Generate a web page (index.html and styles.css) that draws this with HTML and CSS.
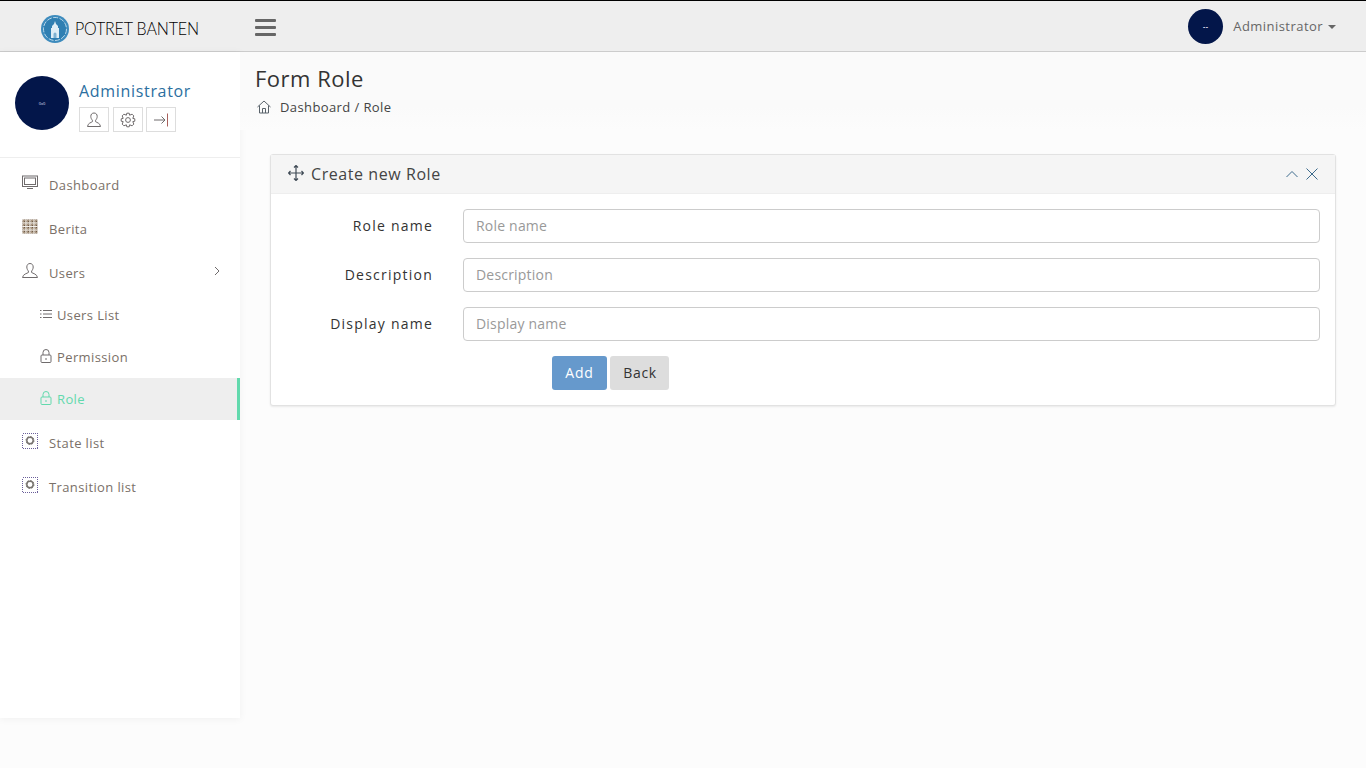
FILE: index.html
```html
<!DOCTYPE html>
<html lang="en">
<head>
<meta charset="utf-8">
<title>Form Role</title>
<link rel="stylesheet" href="styles.css">
</head>
<body>
<header class="navbar">
  <div class="brand">
    <svg class="logo" viewBox="0 0 28 28" width="28" height="28">
      <circle cx="14" cy="14" r="14" fill="#3d8bbd"/>
      <circle cx="14" cy="14" r="11.5" fill="#2f7fb2" stroke="#b9d8ea" stroke-width="1" stroke-dasharray="5 1.5"/>
      <path d="M14 6l1 3 2 2v2h1v10h-8V13h1v-2l2-2z" fill="#dfeef6"/>
      <path d="M12.5 23v-4a1.5 1.5 0 0 1 3 0v4z" fill="#7fb2d2"/>
    </svg>
    <span class="brand-name">POTRET BANTEN</span>
  </div>
  <button class="burger" aria-label="Toggle menu"><span></span><span></span><span></span></button>
  <div class="nav-user">
    <span class="avatar avatar-sm">--</span>
    <span class="nav-user-name">Administrator</span>
    <span class="caret"></span>
  </div>
</header>

<div class="layout">
  <aside class="sidebar">
    <div class="profile">
      <span class="avatar avatar-lg">0x0</span>
      <div class="profile-info">
        <div class="profile-name">Administrator</div>
        <div class="profile-actions">
          <a class="mini-btn"><svg viewBox="0 0 16 16" width="16" height="16" class="ic"><path d="M8 1c-2 0-3.200 1.400-3.200 3.400 0 1.600.8 3 1.600 3.800v1.500C5.200 10.600 1.900 11 1.500 14.500h13c-.4-3.500-3.700-3.900-4.900-4.800V8.200c.8-.8 1.600-2.200 1.600-3.800C11.200 2.400 10 1 8 1z"/></svg></a>
          <a class="mini-btn"><svg viewBox="0 0 16 16" width="16" height="16" class="ic"><circle cx="8" cy="8" r="2.400"/><path d="M6.800 1.200H9.200L9.600 3.200L12.100 2.200L13.800 3.900L12.800 6.400L14.800 6.800V9.200L12.800 9.600L13.800 12.100L12.100 13.800L9.600 12.800L9.200 14.800H6.800L6.400 12.800L3.900 13.800L2.200 12.100L3.200 9.600L1.200 9.200V6.800L3.200 6.400L2.200 3.900L3.900 2.200L6.400 3.200Z"/></svg></a>
          <a class="mini-btn"><svg viewBox="0 0 16 16" width="16" height="16" class="ic"><path d="M1 8h11M8.500 4.500L12 8l-3.500 3.500"/><path d="M14.500 1.500v13" stroke="#a8605c"/></svg></a>
        </div>
      </div>
    </div>
    <nav class="menu">
      <a class="item"><svg viewBox="0 0 16 16" width="16" height="16" class="ic item-ic"><rect x=".5" y="1" width="15" height="10.500"/><rect x="2.500" y="3" width="11" height="6.500"/><path d="M5 13.500h6"/></svg><span>Dashboard</span></a>
      <a class="item"><svg viewBox="0 0 16 16" width="16" height="16" class="item-ic">
        <defs><pattern id="stipple" width="2" height="2" patternUnits="userSpaceOnUse"><rect width="2" height="2" fill="#a8957f"/><rect width="1" height="1" fill="#6f5a48"/></pattern></defs>
        <rect x=".5" y=".5" width="15" height="14" fill="url(#stipple)"/><path d="M4 .5v14M8 .5v14M12 .5v14M.5 4h15M.5 7.500h15M.5 11h15" stroke="#f1eee9" stroke-width="1" fill="none"/></svg><span>Berita</span></a>
      <a class="item"><svg viewBox="0 0 16 16" width="16" height="16" class="ic item-ic"><path d="M8 .5c-2 0-3.200 1.500-3.200 3.500 0 1.700.8 3.200 1.600 4v1.500C5.200 10.400 1 11 .5 14.500h15C15 11 10.800 10.400 9.600 9.500V8c.8-.8 1.600-2.300 1.600-4 0-2-1.200-3.500-3.200-3.500z"/></svg><span>Users</span><svg class="ic chevron" viewBox="0 0 8 10" width="8" height="10"><path d="M2 1l4 4-4 4"/></svg></a>
      <div class="submenu">
        <a class="item sub"><svg viewBox="0 0 12 12" width="12" height="12" class="ic sub-ic"><path d="M3 2.500h9M3 6h9M3 9.500h9M0 2.500h1.500M0 6h1.500M0 9.500h1.500"/></svg><span>Users List</span></a>
        <a class="item sub"><svg viewBox="0 0 12 14" width="12" height="14" class="ic sub-ic"><rect x="1" y="6" width="10" height="7.500" rx="1"/><path d="M3 6V3.500a3 3 0 0 1 6 0V6M6 9v2"/></svg><span>Permission</span></a>
        <a class="item sub active"><svg viewBox="0 0 12 14" width="12" height="14" class="ic sub-ic"><rect x="1" y="6" width="10" height="7.500" rx="1"/><path d="M3 6V3.500a3 3 0 0 1 6 0V6M6 9v2"/></svg><span>Role</span></a>
      </div>
      <a class="item"><svg viewBox="0 0 16 16" width="16" height="16" class="ic item-ic state-ic"><rect x=".5" y=".5" width="15" height="15" class="dots"/><circle cx="8" cy="7.500" r="3.200" class="ring"/><circle cx="8" cy="7.500" r="4" class="teeth"/></svg><span>State list</span></a>
      <a class="item"><svg viewBox="0 0 16 16" width="16" height="16" class="ic item-ic state-ic"><rect x=".5" y=".5" width="15" height="15" class="dots"/><circle cx="8" cy="7.500" r="3.200" class="ring"/><circle cx="8" cy="7.500" r="4" class="teeth"/></svg><span>Transition list</span></a>
    </nav>
  </aside>

  <main class="content">
    <section class="page-head">
      <h1>Form Role</h1>
      <div class="crumbs">
        <svg viewBox="0 0 14 14" width="14" height="14" class="ic home"><path d="M.5 7L7 1l6.500 6M2.500 5.500V13h9V5.500M5.500 13V8.500h3V13"/></svg>
        <span>Dashboard / Role</span>
      </div>
    </section>
    <section class="card">
      <div class="card-head">
        <svg viewBox="0 0 16 16" width="16" height="16" class="ic move"><path d="M8 .5v15M.5 8h15M6 2.500L8 .5l2 2M6 13.500l2 2 2-2M2.500 6L.5 8l2 2M13.500 6l2 2-2 2"/></svg>
        <h2>Create new Role</h2>
        <div class="card-tools">
          <svg viewBox="0 0 12 8" width="12" height="8" class="tool"><path d="M.5 7L6 1.500 11.500 7"/></svg>
          <svg viewBox="0 0 12 12" width="12" height="12" class="tool"><path d="M.5.500l11 11M11.500.500l-11 11"/></svg>
        </div>
      </div>
      <form class="form">
        <div class="row"><label for="f1">Role name</label><input id="f1" placeholder="Role name"></div>
        <div class="row"><label for="f2">Description</label><input id="f2" placeholder="Description"></div>
        <div class="row"><label for="f3">Display name</label><input id="f3" placeholder="Display name"></div>
        <div class="actions">
          <button type="button" class="btn btn-add">Add</button>
          <button type="button" class="btn btn-back">Back</button>
        </div>
      </form>
    </section>
  </main>
</div>
</body>
</html>
```

FILE: styles.css
```css
* { box-sizing: border-box; }
html, body { margin: 0; height: 100%; }
body {
  background: #fcfcfc;
  font-family: "Open Sans", sans-serif;
  color: #333;
  overflow: hidden;
}
a { text-decoration: none; color: inherit; }
.ic { fill: none; stroke: #6f6b6c; stroke-width: 1; display: block; }

.navbar {
  height: 52px;
  background: #eee;
  border-top: 1px solid #000;
  border-bottom: 1px solid #ccc;
  display: flex;
  align-items: center;
}
.brand { width: 240px; padding-left: 41px; display: flex; align-items: center; gap: 6px; }
.logo { display: block; flex: none; margin-top: 6px; }
.brand-name {
  font-family: "Lato", sans-serif;
  font-weight: 300;
  font-size: 16px;
  letter-spacing: -.15px;
  color: #000;
  margin-top: 2px;
  white-space: nowrap;
  display: inline-block;
  transform: scaleY(1.13);
}
.burger {
  margin-left: 15px;
  width: 21px;
  padding: 0;
  border: 0;
  background: none;
  display: flex;
  flex-direction: column;
  gap: 4px;
  margin-top: 3px;
}
.burger span { height: 3px; background: #666; display: block; border-radius: 1px; }
.nav-user { margin-left: auto; padding-right: 30px; display: flex; align-items: center; }
.nav-user-name { margin-left: 10px; font-size: 13px; letter-spacing: .45px; color: #666; }
.caret {
  margin-left: 5px;
  margin-top: 2px;
  border-left: 4px solid transparent;
  border-right: 4px solid transparent;
  border-top: 4px solid #666;
}
.avatar {
  background: #03164a;
  border-radius: 50%;
  color: #dde;
  display: flex;
  align-items: center;
  justify-content: center;
  flex: none;
}
.avatar-sm { width: 35px; height: 35px; font-size: 7px; font-weight: 700; letter-spacing: .5px; }
.avatar-lg { width: 54px; height: 54px; font-size: 4px; }

.layout { display: flex; align-items: flex-start; }
.sidebar {
  width: 240px;
  height: 666px;
  background: #fff;
  box-shadow: 0 1px 8px rgba(0,0,0,.05);
  flex: none;
}
.profile {
  height: 106px;
  padding: 24px 15px 0;
  display: flex;
  gap: 10px;
  border-bottom: 1px solid #eee;
}
.profile-name { font-size: 16px; letter-spacing: .68px; color: #2c6f9f; line-height: 22px; margin-top: 4px; }
.profile-actions { display: flex; gap: 4px; margin-top: 5px; }
.mini-btn {
  width: 30px;
  height: 25px;
  border: 1px solid #ddd;
  display: flex;
  align-items: center;
  justify-content: center;
}
.mini-btn:last-child { margin-left: -1px; }
.menu { display: block; }
.item {
  display: flex;
  align-items: center;
  height: 44px;
  padding-left: 22px;
  font-size: 13px;
  letter-spacing: .38px;
  color: #7a7068;
}
.menu > .item:first-child { margin-top: 5px; }
.item-ic { margin-right: 11px; flex: none; margin-top: -4px; }
.chevron { margin-left: auto; margin-right: 19px; margin-top: -4px; }
.submenu { margin: -1px 0 1px; }
.item.sub { height: 42px; padding-left: 40px; }
.sub-ic { margin-right: 5px; flex: none; margin-top: -2px; }
.item.active { background: #eee; color: #62d9ad; border-right: 3px solid #62d9ad; }
.item.active .ic { stroke: #62d9ad; }
.state-ic .dots { stroke: #6a5f9a; stroke-dasharray: 1 1; shape-rendering: crispEdges; }
.state-ic .ring { stroke: #77736f; stroke-width: 1.5; }
.state-ic .teeth { stroke: #77736f; stroke-width: 1; stroke-dasharray: 1.5 1.6; }

.content { flex: 1; min-width: 0; }
.page-head {
  height: 78px;
  padding: 11px 15px 0;
  background: linear-gradient(#fafafa 70%, #fcfcfc);
}
.page-head h1 { margin: 0; font-size: 22px; font-weight: 400; letter-spacing: .5px; line-height: 30px; color: #333; }
.crumbs { display: flex; align-items: center; gap: 9px; font-size: 13px; letter-spacing: .4px; margin-top: 5px; margin-left: 2px; color: #444; }
.home { stroke: #59626a; }

.card {
  margin: 24px 30px 0;
  height: 252px;
  background: #fff;
  border: 1px solid #e2e2e2;
  border-radius: 3px;
  box-shadow: 0 1px 2px rgba(0,0,0,.08);
}
.card-head {
  height: 39px;
  background: #f5f5f5;
  border-bottom: 1px solid #eee;
  display: flex;
  align-items: center;
  padding: 0 17px;
}
.move { margin-top: -3px; stroke: #3f4a55; stroke-width: 1.2; }
.card-head h2 { margin: 0 0 0 7px; font-size: 16px; font-weight: 400; letter-spacing: .57px; color: #444; }
.card-tools { margin-left: auto; display: flex; align-items: center; gap: 8px; }
.tool { fill: none; stroke: #3c6a8c; stroke-width: 1; display: block; }
.form { padding: 15px 15px 0 0; }
.row { display: flex; align-items: center; height: 34px; margin-bottom: 15px; }
.row label {
  width: 162px;
  flex: none;
  text-align: right;
  font-size: 14px;
  letter-spacing: 1.23px;
  color: #333;
  margin-top: -2px;
}
.row input {
  margin-left: 30px;
  flex: 1;
  min-width: 0;
  height: 34px;
  padding: 0 12px 2px;
  border: 1px solid #ccc;
  border-radius: 4px;
  font: 14px "Open Sans", sans-serif;
  letter-spacing: .2px;
  background: #fff;
}
.row input::placeholder { color: #999; opacity: 1; }
.actions { padding-left: 281px; display: flex; gap: 3px; }
.btn {
  height: 34px;
  padding: 0 0 2px;
  border: 0;
  border-radius: 3px;
  font: 14px "Open Sans", sans-serif;
  letter-spacing: .9px;
}
.btn-add { background: #6699cc; color: #fff; width: 55px; }
.btn-back { background: #ddd; color: #333; width: 59px; padding-left: 1px; letter-spacing: .7px; }
```
